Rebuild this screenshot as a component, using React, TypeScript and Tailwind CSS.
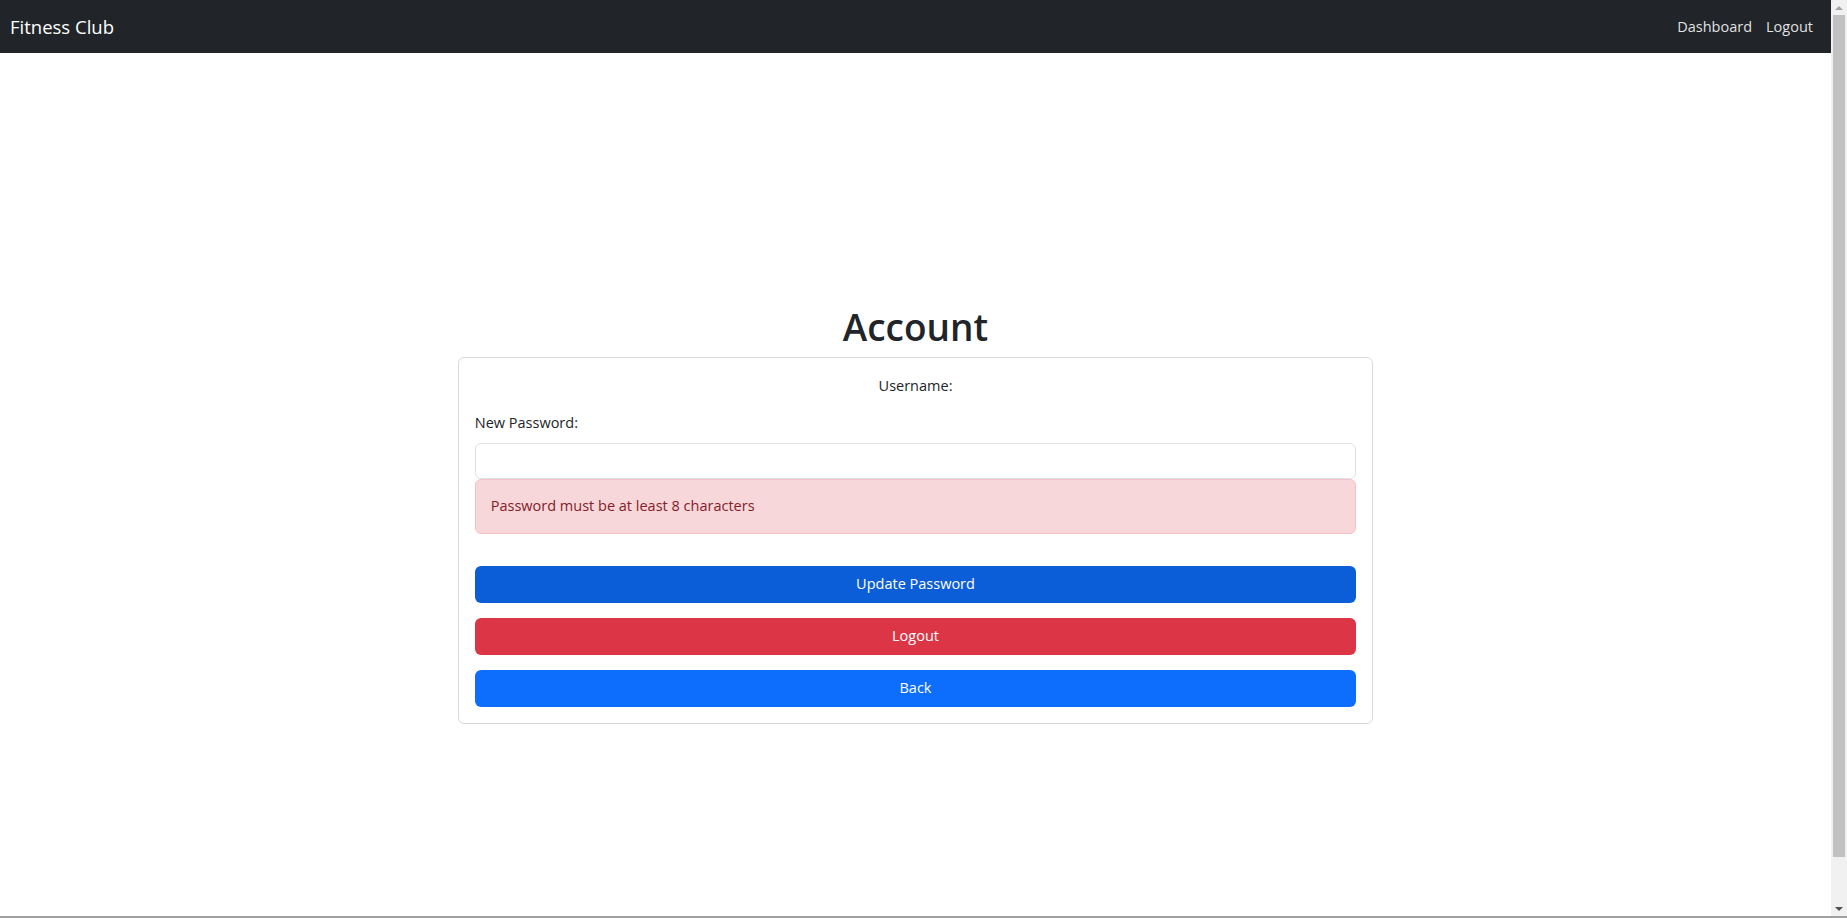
import { useState } from 'react';

function NavBar() {
  return (
    <nav className="h-[53px] w-full shrink-0 bg-[#212529] flex items-center justify-between px-[10px]">
      <span className="text-[18.5px] text-white">Fitness Club</span>
      <div className="flex items-center gap-x-[14px] pr-[8px] text-[14.5px] text-[#ffffffe0]">
        <span className="cursor-pointer">Dashboard</span>
        <span className="cursor-pointer">Logout</span>
      </div>
    </nav>
  );
}

// window scrollbar as seen in the screenshot
function ScrollBar() {
  return (
    <div className="w-[16px] shrink-0 bg-[#f1f1f1] flex flex-col items-center">
      <div className="h-[15px] w-full flex items-center justify-center">
        <div className="w-0 h-0 border-x-[4px] border-x-transparent border-b-[4px] border-b-[#a3a3a3]" />
      </div>
      <div className="h-[842px] w-[12px] bg-[#c1c1c1]" />
      <div className="flex-1" />
      <div className="h-[15px] w-full flex items-center justify-center">
        <div className="w-0 h-0 border-x-[4px] border-x-transparent border-t-[4px] border-t-[#505050]" />
      </div>
    </div>
  );
}

function AccountPage() {
  const [password, setPassword] = useState('');
  const username = '';

  return (
    <div className="min-h-screen w-full flex flex-col items-center justify-center">
      <h1 className="text-[37px] leading-[48px] font-semibold mb-[6px] mt-[2px]">Account</h1>
      <div className="w-1/2 border border-[#d9d9d9] rounded-[6px] p-[16px] flex flex-col">
        <p className="text-center text-[14.5px] leading-[24px]">Username: {username}</p>
        <label className="mt-[13px] text-[14.5px] leading-[24px]">New Password:</label>
        <input
          type="password"
          value={password}
          onChange={(e) => setPassword(e.target.value)}
          className="mt-[8px] h-[36px] w-full border border-[#dee2e6] rounded-[6px] px-[12px] outline-none"
        />
        <div
          className="h-[55px] flex items-center px-[15px] bg-[#f8d7da] border border-[#f5c2c7] rounded-[6px]
            text-[#842029] text-[14.5px]">
          Password must be at least 8 characters
        </div>
        <button className="mt-[32px] h-[37px] w-full rounded-[6px] bg-[#0b5ed7] text-white text-[14.5px]">
          Update Password
        </button>
        <button className="mt-[15px] h-[37px] w-full rounded-[6px] bg-[#dc3545] text-white text-[14.5px]">
          Logout
        </button>
        <button className="mt-[15px] h-[37px] w-full rounded-[6px] bg-[#0d6efd] text-white text-[14.5px]">
          Back
        </button>
      </div>
    </div>
  );
}

export default function App() {
  return (
    <div
      className="h-screen w-full flex flex-col bg-white text-[#212529]"
      style={{ fontFamily: '"Open Sans", "Noto Sans", sans-serif' }}>
      <div className="flex-1 flex min-h-0">
        <div className="flex-1 min-w-0 overflow-hidden">
          <NavBar />
          <AccountPage />
        </div>
        <ScrollBar />
      </div>
      <div className="h-[2px] w-full shrink-0 bg-[#a0a0a0]" />
    </div>
  );
}
